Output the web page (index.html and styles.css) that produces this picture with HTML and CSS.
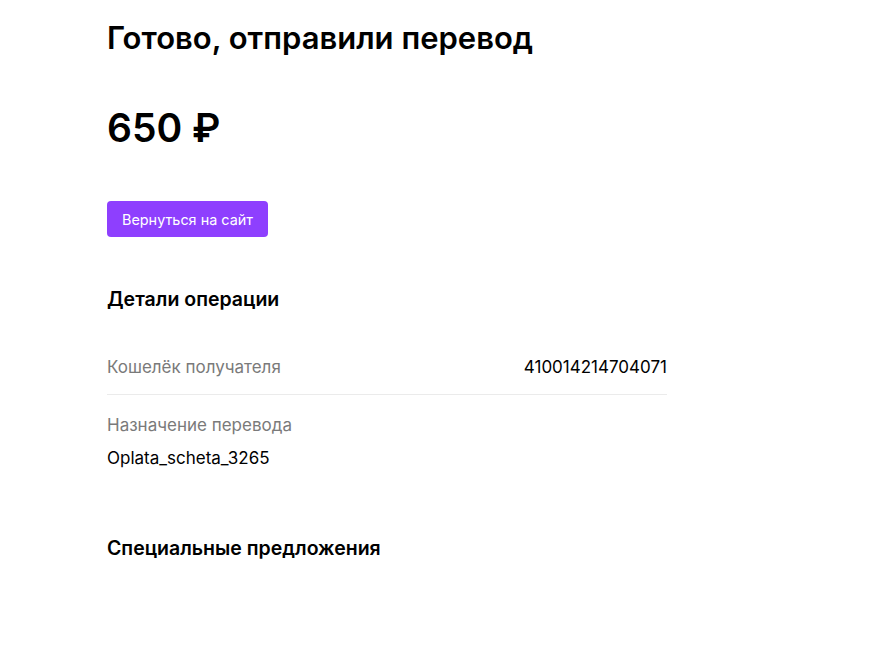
FILE: index.html
```html
<!DOCTYPE html>
<html lang="ru">
<head>
    <meta charset="UTF-8">
    <meta name="viewport" content="width=device-width, initial-scale=1.0">
    <title>Перевод отправлен</title>
    <link rel="stylesheet" href="styles.css">
</head>
<body>

<div class="page">
    <h1 class="title">Готово, отправили перевод</h1>
    <div class="amount">650 ₽</div>

    <button class="back-btn">Вернуться на сайт</button>

    <div class="details">
        <h3>Детали операции</h3>

        <div class="row">
            <span class="label">Кошелёк получателя</span>
            <span class="value">410014214704071</span>
        </div>

        <div class="row row-column">
            <span class="label">Назначение перевода</span>
            <span class="value">Oplata_scheta_3265</span>
        </div>
    </div>

    <div class="offers">
        <h3>Специальные предложения</h3>
    </div>
</div>

</body>
</html>
```

FILE: styles.css
```css
body {
    font-family: Inter, "Noto Sans", sans-serif;
    background-color: #fff;
    color: #000;
    margin: 0;
    padding: 0;
}
.page {
    width: 560px;
    padding: 18px 0 0 107px;
}
.title {
    font-size: 31px;
    font-weight: 600;
    line-height: 40px;
    margin: 0;
}
.amount {
    font-size: 39px;
    font-weight: 600;
    line-height: 48px;
    margin-top: 46px;
}
.back-btn {
    margin-top: 49px;
    height: 36px;
    padding: 0 15px;
    background-color: #8e3ffe;
    color: white;
    border: none;
    border-radius: 4px;
    font-family: inherit;
    font-size: 14.4px;
    cursor: pointer;
}
.details {
    margin-top: 50px;
}
.details h3, .offers h3 {
    font-size: 19.5px;
    font-weight: 600;
    line-height: 24px;
    margin: 0;
}
.row {
    display: flex;
    justify-content: space-between;
    align-items: center;
    padding: 46px 0 17px;
    border-bottom: 1px solid #ebebeb;
    font-size: 17px;
}
.row-column {
    flex-direction: column;
    align-items: flex-start;
    padding: 20px 0 0;
    border-bottom: none;
    gap: 13px;
}
.label {
    color: #7a7a7a;
}
.value {
    color: #000;
}
.offers {
    margin-top: 68px;
}
```
